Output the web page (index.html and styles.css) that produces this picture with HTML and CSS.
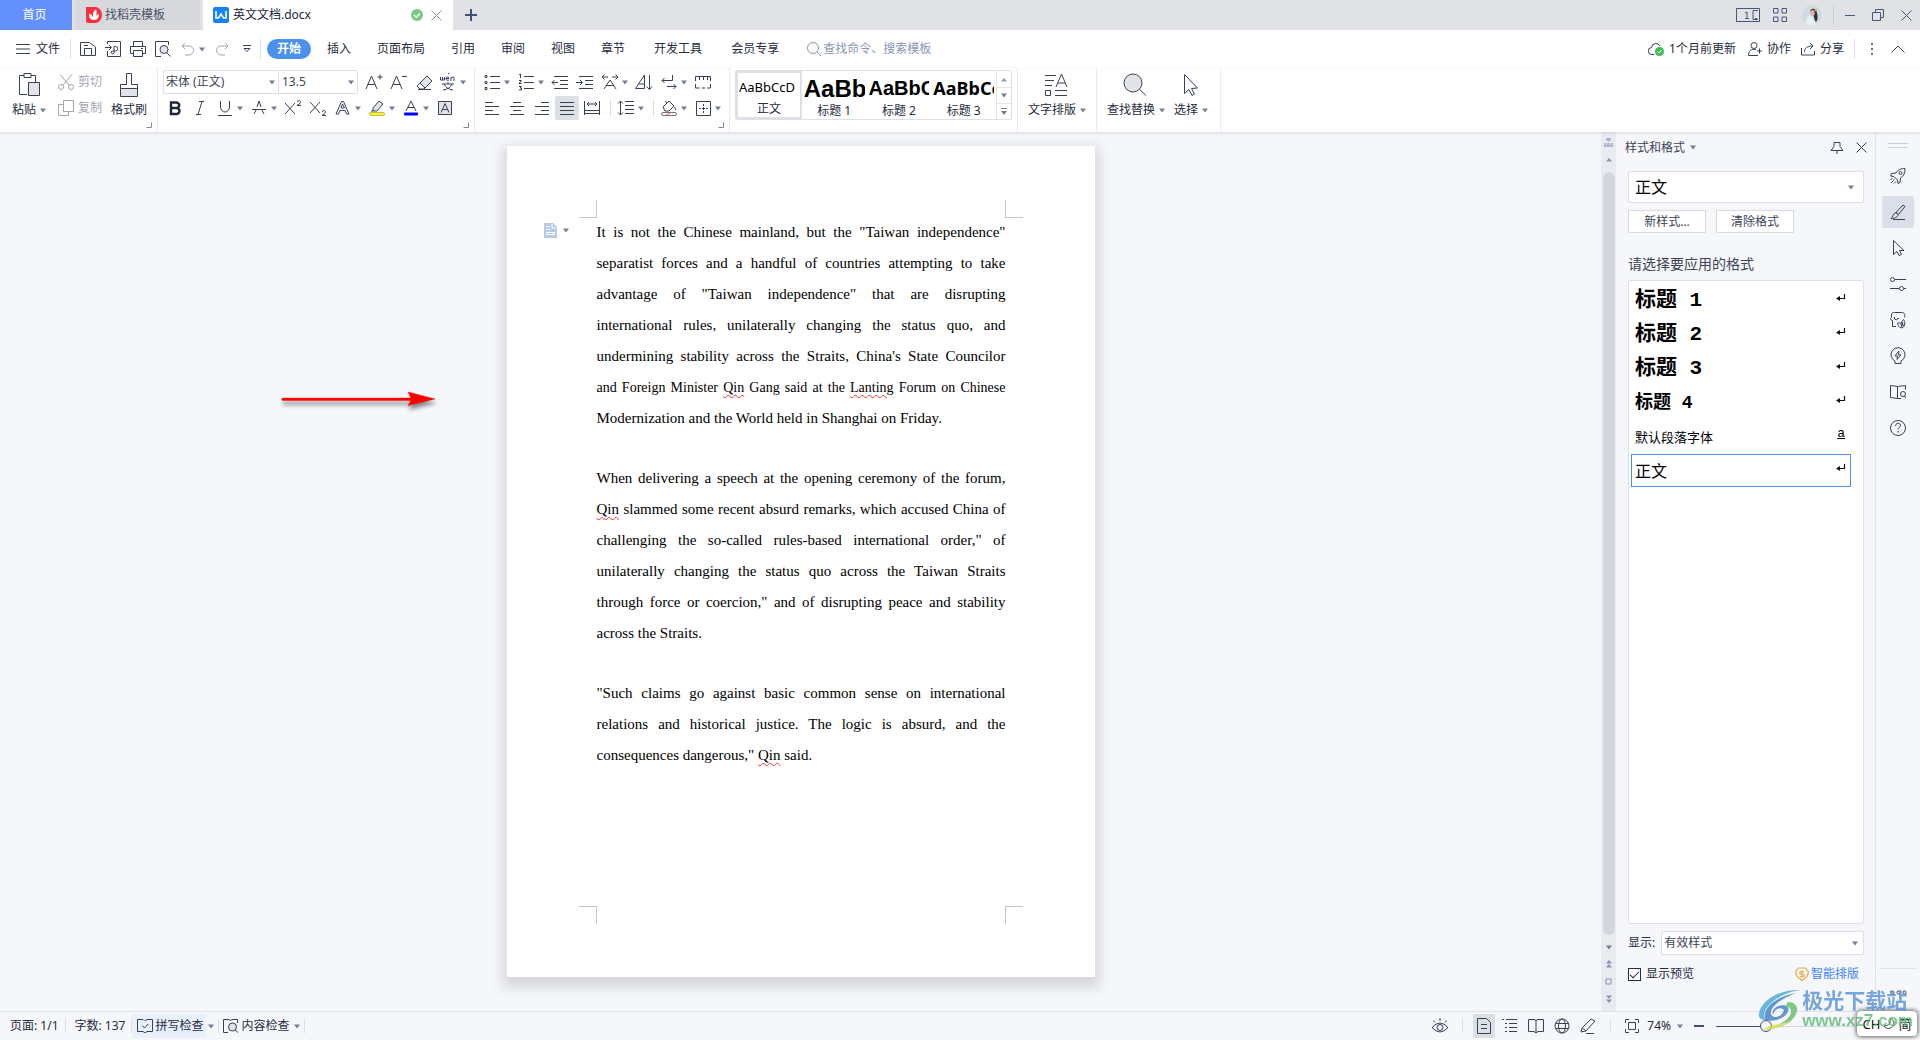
FILE: index.html
```html
<!DOCTYPE html>
<html lang="zh-CN">
<head>
<meta charset="utf-8">
<title>英文文档.docx</title>
<link rel="stylesheet" href="styles.css">
</head>
<body>
<svg class="defs" aria-hidden="true">
  <symbol id="caret" viewBox="0 0 8 5"><path d="M1 0.500h6L4 4.500z" fill="#737d95" stroke="none"/></symbol>
  <symbol id="ret" viewBox="0 0 10 8"><path d="M8.500 0v4.500H3" fill="none" stroke="#111" stroke-width="1.200"/><path d="M0 4.500L4 2v5z" fill="#111" stroke="none"/></symbol>
  <symbol id="launch" viewBox="0 0 6 6"><path d="M5.500 0.500v5h-5" fill="none" stroke="#7d88a0"/></symbol>
</svg>

<header class="titlebar">
  <button class="tab home">首页</button>
  <button class="tab template">
    <svg width="16" height="16" viewBox="0 0 16 16"><path d="M0 0h9a7 8 0 0 1 0 16H2a2 2 0 0 1-2-2z" fill="#f9303e"/><path d="M8 13C3 13 2.500 9 3.500 6.500 6 8 7 10 7.200 11.500 6.500 8 7 4 10 2.500c1.500 3 .5 6-1.500 9C9.500 9 11 7.500 13 7c0 4-2 6-5 6z" fill="#fff"/></svg>
    <span>找稻壳模板</span>
  </button>
  <div class="tab current">
    <svg width="16" height="16" viewBox="0 0 16 16"><rect width="16" height="16" rx="2" fill="#1583f8"/><path d="M3 4v7h2.500L8 7l2.500 4H13V4" fill="none" stroke="#fff" stroke-width="1.600"/></svg>
    <span>英文文档.docx</span>
    <svg class="ok" width="12" height="12" viewBox="0 0 12 12"><circle cx="6" cy="6" r="6" fill="#79cb83"/><path d="M3 6l2.300 2.300L9 4.500" fill="none" stroke="#fff" stroke-width="1.300"/></svg>
    <button class="bare" aria-label="关闭标签"><svg width="11" height="11" viewBox="0 0 11 11"><path class="s-muted" d="M.5.5l10 10M10.500.5l-10 10"/></svg></button>
  </div>
  <button class="bare plus" aria-label="新建"><svg width="12" height="12" viewBox="0 0 12 12"><path d="M6 0v12M0 6h12" stroke="#41506f" stroke-width="2"/></svg></button>
  <div class="win">
    <button class="bare" aria-label="窗口"><svg width="24" height="14" viewBox="0 0 24 14"><path class="s-blue" d="M.5.5h23v13H.5zM22 2.500h-5v9h5M19 10.500h2"/><path class="s-blue" d="M9 5l2-1v6M9 10.500h4"/></svg></button>
    <button class="bare" aria-label="应用"><svg width="14" height="14" viewBox="0 0 14 14"><path class="s-blue" d="M.5.5h4.500v4.500H.5zM9 .5h4.500v4.500H9zM.5 9h4.500v4.500H.5zM9 9h4.500v4.500H9z"/></svg></button>
    <button class="bare account" aria-label="账户"><svg width="20" height="20" viewBox="0 0 20 20"><circle cx="10" cy="10" r="10" fill="#cedbe1"/><path d="M4 18c0-5 2-7 5-8l5 9a10 10 0 0 1-9 0z" fill="#e5f2f5"/><path d="M8 6c2-4 7-2 7 2 1 3 1 7-1 9-2-2-2-6-3-8z" fill="#38303b"/><ellipse cx="10.500" cy="8" rx="2.200" ry="3" fill="#ddb1ab"/><circle cx="14" cy="5" r="1.400" fill="#d4b96e"/></svg></button>
    <span class="sep tall"></span>
    <button class="bare" aria-label="最小化"><svg width="10" height="12" viewBox="0 0 10 12"><path class="s-blue" d="M0 6.500h10"/></svg></button>
    <button class="bare" aria-label="还原"><svg width="12" height="12" viewBox="0 0 12 12"><path class="s-blue" d="M.5 3.500h8v8h-8zM3.500 3V.5h8v8H9"/></svg></button>
    <button class="bare" aria-label="关闭"><svg width="11" height="11" viewBox="0 0 11 11"><path class="s-blue" d="M.5.5l10 10M10.500.5l-10 10"/></svg></button>
  </div>
</header>

<nav class="menubar">
  <button class="bare file"><svg width="14" height="10" viewBox="0 0 14 10"><path class="s" d="M0 .5h14M0 5h14M0 9.500h14"/></svg><span>文件</span></button>
  <span class="sep"></span>
  <div class="quick">
    <button class="bare" aria-label="保存"><svg width="16" height="16" viewBox="0 0 16 16"><path class="s" d="M4 14.500H.5V1.500h9l6 4.500v8.500H12M4.500 14.500v-7h7v7zM4 4.500h4"/></svg></button>
    <button class="bare" aria-label="输出为PDF"><svg width="16" height="16" viewBox="0 0 16 16"><path class="s" d="M2.500 3V.5h13v15h-13V10M0 6.500h6M4 4l2.500 2.500L4 9M9 12V5.500h1.500a2 2 0 0 1 0 4.500H7a1.500 1.500 0 1 0 2 2"/></svg></button>
    <button class="bare" aria-label="打印"><svg width="16" height="16" viewBox="0 0 16 16"><path class="s" d="M3.500 5V.5h9V5M3.500 12.500h-3v-7h15v7h-3M3.500 9.500h9v6h-9zM11 7.500h2"/></svg></button>
    <button class="bare" aria-label="打印预览"><svg width="16" height="16" viewBox="0 0 16 16"><path class="s" d="M6 15.500H.5V.5h13V4M11.500 11.500l4 4"/><circle class="s" cx="9" cy="8.500" r="4" fill="#dde0e8"/></svg></button>
    <button class="bare undo" aria-label="撤销"><svg width="14" height="14" viewBox="0 0 14 14"><path class="s-dim" d="M4 1L1 4l3 3M1 4h7a4.500 4.500 0 0 1 0 9H4"/></svg><svg class="c"><use href="#caret"/></svg></button>
    <button class="bare redo" aria-label="恢复"><svg width="14" height="14" viewBox="0 0 14 14"><path class="s-dim" d="M10 1l3 3-3 3M13 4H6a4.500 4.500 0 0 0 0 9h4"/></svg></button>
    <button class="bare" aria-label="更多"><svg width="8" height="8" viewBox="0 0 8 8"><path class="s" d="M0 .5h8M1 3.500l3 3 3-3z"/></svg></button>
  </div>
  <span class="sep"></span>
  <div class="menus">
    <button class="pill">开始</button><button class="bare">插入</button><button class="bare">页面布局</button><button class="bare">引用</button><button class="bare">审阅</button><button class="bare">视图</button><button class="bare">章节</button><button class="bare">开发工具</button><button class="bare">会员专享</button>
  </div>
  <label class="search"><svg width="14" height="14" viewBox="0 0 14 14"><circle class="s-muted" cx="6" cy="6" r="5.500"/><path class="s-muted" d="M10 10l4 4"/></svg><input type="text" placeholder="查找命令、搜索模板" aria-label="查找命令"></label>
  <div class="share">
    <button class="bare cloud"><svg width="16" height="14" viewBox="0 0 16 14"><path class="s" d="M6 12.500H4a3.500 3.500 0 0 1-.5-7A4.500 4.500 0 0 1 12 4"/><circle cx="11.500" cy="9.500" r="4.500" fill="#3ebd54"/><path d="M9.500 9.500l1.500 1.500 2.500-3" stroke="#fff" fill="none"/></svg><span>1个月前更新</span></button>
    <button class="bare"><svg width="14" height="14" viewBox="0 0 14 14"><circle class="s" cx="6" cy="3.500" r="3"/><path class="s" d="M8 7.500C3 6.500.5 9 .5 13.500h9.500M9 9h5M11.500 6.500v5"/></svg><span>协作</span></button>
    <button class="bare"><svg width="14" height="14" viewBox="0 0 14 14"><path class="s" d="M.5 6v7h13V9M3.500 10c0-4 3-6 8-6M9 1l3 3-3 3"/></svg><span>分享</span></button>
    <span class="sep"></span>
    <button class="bare dots" aria-label="更多"><svg width="2" height="12" viewBox="0 0 2 12"><path d="M0 0h2v2H0zM0 5h2v2H0zM0 10h2v2H0z" fill="#6b7285"/></svg></button>
    <button class="bare" aria-label="收起"><svg width="14" height="8" viewBox="0 0 14 8"><path class="s" d="M.5 7.500L7 1l6.500 6.500"/></svg></button>
  </div>
</nav>

<section class="ribbon" aria-label="功能区">
  <div class="group clip">
    <button class="big"><svg width="22" height="24" viewBox="0 0 22 24"><path class="s" d="M8 21.500H.5v-19H5M12 2.500h4.500V9M5 .5h7v4H5z"/><path class="s" d="M9.500 9.500h11v13h-11z" fill="#e2e4e8"/></svg><span>粘贴<svg class="c"><use href="#caret"/></svg></span></button>
    <div class="stack">
      <button class="bare faded"><svg width="16" height="16" viewBox="0 0 16 16"><path class="s-dim" d="M2 .5l9.500 11M14 .5L4.500 11.500"/><circle class="s-dim" cx="3" cy="13" r="2.500"/><circle class="s-dim" cx="13" cy="13" r="2.500"/></svg><span>剪切</span></button>
      <button class="bare faded"><svg width="16" height="16" viewBox="0 0 16 16"><path class="s-dim" d="M5.500.5h10v11h-10zM5 4.500H.5v11h10V12"/></svg><span>复制</span></button>
    </div>
    <button class="big"><svg width="18" height="24" viewBox="0 0 18 24"><path class="s" d="M.5 15.500h17v8H.5z" fill="#e2e4e8"/><path class="s" d="M.5 15.500v-4h6V.5h5v11h6v4"/></svg><span>格式刷</span></button>
    <svg class="launch"><use href="#launch"/></svg>
  </div>

  <div class="group font">
    <div class="row first">
      <span class="combo fam"><select aria-label="字体"><option>宋体 (正文)</option></select><svg class="c"><use href="#caret"/></svg></span><span class="combo size"><select aria-label="字号"><option>13.5</option></select><svg class="c"><use href="#caret"/></svg></span>
      <div class="tools">
      <button class="t" aria-label="增大字号"><svg viewBox="0 0 20 20"><path class="s" d="M3 17L8.500 4 14 17M5 12.500h7M14.500 5h5M17 2.500v5"/></svg></button>
      <button class="t" aria-label="减小字号"><svg viewBox="0 0 20 20"><path class="s" d="M3 17L8.500 4 14 17M5 12.500h7M14 4.500h5"/></svg></button>
      <button class="t" aria-label="清除格式"><svg viewBox="0 0 20 20"><path class="s" d="M7 11l7-7 5 5-7 7z" fill="#e2e4e8"/><path class="s" d="M7 11l-3 3 3 3h4l1-1M5 17.500h13"/></svg></button>
      <button class="t" aria-label="拼音指南"><svg viewBox="0 0 20 20"><path class="s" d="M2.500 5v3h4V5M4.500 5v3M8 6.500h3c0-2-3-2-3 0s2 2 3 1.500M13 9V5.500q3-1 3 0V9M10 2l1.500-1M4 12h12M10 10v2M6 12q2 5 9 6M14 12q-2 5-9 6"/></svg><svg class="c"><use href="#caret"/></svg></button>
      </div>
    </div>
    <div class="row tools">
      <button class="t" aria-label="加粗"><svg viewBox="0 0 20 20"><path d="M6 4.500h5a3 2.500 0 0 1 0 5.500H6zM6 10h5.500a3 3 0 0 1 0 6H6z" fill="none" stroke="#20263a" stroke-width="2.400"/></svg></button>
      <button class="t" aria-label="倾斜"><svg viewBox="0 0 20 20"><path class="s" d="M9 3.500h5M6 16.500h5M12 3.500l-4 13"/></svg></button>
      <button class="t" aria-label="下划线"><svg viewBox="0 0 20 20"><path class="s" d="M5.500 3v6a4.500 5 0 0 0 9 0V3M3 17.500h14"/></svg><svg class="c"><use href="#caret"/></svg></button>
      <button class="t" aria-label="删除线"><svg viewBox="0 0 20 20"><path class="s" d="M5 16l2-4M8 9l2-6 2 6M13 12l2 4M3 11.500h14"/></svg><svg class="c"><use href="#caret"/></svg></button>
      <button class="t" aria-label="上标"><svg viewBox="0 0 20 20"><path class="s" d="M2 5l10 11M12 5L2 16M14 3.500q3-2 3.500 0t-3.500 4h4"/></svg></button>
      <button class="t" aria-label="下标"><svg viewBox="0 0 20 20"><path class="s" d="M2 4l10 11M12 4L2 15M14 13.500q3-2 3.500 0t-3.500 4h4"/></svg></button>
      <button class="t" aria-label="文字效果"><svg viewBox="0 0 20 20"><path class="s" d="M3 16L8.500 3.500h2L16 16h-2.500l-1.500-3.500H7L5.500 16zM8 10h3.500L9.500 6z"/></svg><svg class="c"><use href="#caret"/></svg></button>
      <button class="t" aria-label="突出显示"><svg viewBox="0 0 20 20"><path class="s" d="M6 10l6-7 4 3-6 7H6zM6 13H4" fill="#e2e4e8"/><rect x="2.500" y="14.500" width="15" height="3" rx="1.500" fill="#ff0" stroke="#8b8b55" stroke-width=".6"/></svg><svg class="c"><use href="#caret"/></svg></button>
      <button class="t" aria-label="字体颜色"><svg viewBox="0 0 20 20"><path class="s" d="M5 13l5-10 5 10M7 9.500h6"/><rect x="3" y="14.500" width="14" height="3" rx="1" fill="#00f"/></svg><svg class="c"><use href="#caret"/></svg></button>
      <button class="t" aria-label="字符底纹"><svg viewBox="0 0 20 20"><path class="s" d="M3.500 3.500h13v13h-13z" fill="#e2e4e8"/><path class="s" d="M6 14.500L10 5.500l4 9M7.500 11.500h5"/></svg></button>
    </div>
    <svg class="launch"><use href="#launch"/></svg>
  </div>

  <div class="group para">
    <div class="row tools">
      <button class="t" aria-label="项目符号"><svg viewBox="0 0 20 20"><path class="s" d="M8 4.500h10M8 10.500h10M8 16.500h10"/><path class="s" d="M3 3.500h2v2H3zM3 9.500h2v2H3zM3 15.500h2v2H3z"/></svg><svg class="c"><use href="#caret"/></svg></button>
      <button class="t" aria-label="编号"><svg viewBox="0 0 20 20"><path class="s" d="M8 4.500h10M8 10.500h10M8 16.500h10M3 3l1.500-1v4M3 8.500h2.500l-2.500 3h2.500M3 14.500h2.500l-1.500 1.500h1.500v2H3"/></svg><svg class="c"><use href="#caret"/></svg></button>
      <button class="t" aria-label="减少缩进"><svg viewBox="0 0 20 20"><path class="s" d="M4 4.500h14M10 8.500h8M10 12.500h8M4 16.500h14M2 10.500h6M4.500 8L2 10.500 4.500 13"/></svg></button>
      <button class="t" aria-label="增加缩进"><svg viewBox="0 0 20 20"><path class="s" d="M4 4.500h14M10 8.500h8M10 12.500h8M4 16.500h14M1 10.500h6M5 8l2.500 2.500L5 13"/></svg></button>
      <button class="t" aria-label="中文版式"><svg viewBox="0 0 20 20"><path class="s" d="M4 17l6-9 6 9M6 13.500h8M2 5h6M4.500 2.500L2 5l2.500 2.500M12 5h6M15.500 2.500L18 5l-2.500 2.500"/></svg><svg class="c"><use href="#caret"/></svg></button>
      <button class="t" aria-label="排序"><svg viewBox="0 0 20 20"><path class="s" d="M1.500 16.500L10.500 3v13.500zM5 12h5.500M15.500 3v14M12.500 14.500l3 3 2.500-3"/></svg></button>
      <button class="t" aria-label="显示编辑标记"><svg viewBox="0 0 20 20"><path class="s" d="M13.500 3v5.500H3M5.500 6L3 8.500 5.500 11M8 14.500h9M14.500 12l2.500 2.500L14.500 17"/></svg><svg class="c"><use href="#caret"/></svg></button>
      <button class="t" aria-label="制表位"><svg viewBox="0 0 20 20"><path class="s" d="M2.500 9V4.500h15V9M6.500 5v3M10.500 5v3M14.500 5v3M2.500 12v4h4M9 16h3M14 16h3.500v-4"/></svg></button>
    </div>
    <div class="row tools">
      <button class="t" aria-label="左对齐"><svg viewBox="0 0 20 20"><path class="s" d="M3 4.500h8M3 8.500h14M3 12.500h8M3 16.500h14"/></svg></button>
      <button class="t" aria-label="居中"><svg viewBox="0 0 20 20"><path class="s" d="M6 4.500h8M3 8.500h14M6 12.500h8M3 16.500h14"/></svg></button>
      <button class="t" aria-label="右对齐"><svg viewBox="0 0 20 20"><path class="s" d="M9 4.500h8M3 8.500h14M9 12.500h8M3 16.500h14"/></svg></button>
      <button class="t on" aria-label="两端对齐"><svg viewBox="0 0 20 20"><path class="s" d="M3 4.500h14M3 8.500h14M3 12.500h14M3 16.500h14"/></svg></button>
      <button class="t" aria-label="分散对齐"><svg viewBox="0 0 20 20"><path class="s" d="M2.500 3v14M17.500 3v14M5 6h10M7 4L5 6l2 2M13 4l2 2-2 2M2.500 12.500h15M2.500 15.500h15"/></svg></button>
      <span class="sep"></span>
      <button class="t" aria-label="行距"><svg viewBox="0 0 20 20"><path class="s" d="M9 3.500h9M9 7.500h9M9 11.500h9M9 15.500h9M4.500 3v14M2 5.500L4.500 3 7 5.500M2 14.500L4.500 17 7 14.500"/></svg><svg class="c"><use href="#caret"/></svg></button>
      <span class="sep"></span>
      <button class="t" aria-label="底纹颜色"><svg viewBox="0 0 20 20"><path class="s" d="M4 9l6-6 5 5-5 5H6zM8 5L6.500 3M15.500 9l1.500 3"/><rect x="2.500" y="14.500" width="15" height="3" rx="1.500" fill="#fff" stroke="#777"/><path d="M7 17.500l5-3" stroke="#e05a5a"/></svg><svg class="c"><use href="#caret"/></svg></button>
      <button class="t" aria-label="边框"><svg viewBox="0 0 20 20"><path class="s" d="M3.500 3.500h14v14h-14zM10.500 6v2M10.500 9v3M10.500 13v2M6 10.500h2M9 10.500h3M13 10.500h2"/></svg><svg class="c"><use href="#caret"/></svg></button>
    </div>
    <svg class="launch"><use href="#launch"/></svg>
  </div>

  <div class="group gallery-group">
    <div class="gallery">
      <button class="style sel"><b class="p0">AaBbCcD</b><span>正文</span></button>
      <button class="style"><b class="p1">AaBb</b><span>标题 1</span></button>
      <button class="style"><b class="p2">AaBbC</b><span>标题 2</span></button>
      <button class="style"><b class="p3">AaBbCc</b><span>标题 3</span></button>
      <div class="roller">
        <button class="bare" aria-label="向上"><svg width="8" height="5" viewBox="0 0 8 5"><path d="M1 4.500h6L4 1z" fill="#9299a8"/></svg></button>
        <button class="bare" aria-label="向下"><svg class="c"><use href="#caret"/></svg></button>
        <button class="bare" aria-label="展开"><svg width="8" height="8" viewBox="0 0 8 8"><path d="M1 0h6v1H1zM1 3h6L4 7z" fill="#737d95"/></svg></button>
      </div>
    </div>
  </div>
  <div class="group mid">
    <button class="big"><svg width="24" height="24" viewBox="0 0 24 24"><path class="s" d="M1 2.500h11M1 7.500h9M1 12.500h7M1.500 17.500h5v5h-5zM11 17.500h12M11 22.500h12M12 14l5.500-13L23 14M14 10h7"/></svg><span>文字排版<svg class="c"><use href="#caret"/></svg></span></button>
  </div>
  <div class="group mid last">
    <button class="big"><svg width="24" height="24" viewBox="0 0 24 24"><circle class="s" cx="10" cy="10" r="9" fill="#e2e4e8"/><path class="s" d="M16.500 16.500l6.500 6"/></svg><span>查找替换<svg class="c"><use href="#caret"/></svg></span></button>
    <button class="big"><svg width="18" height="24" viewBox="0 0 18 24"><path class="s" d="M3.500 1.500v19l4.500-4 3 6 2.500-1.500-3-5.500 6-.5z"/></svg><span>选择<svg class="c"><use href="#caret"/></svg></span></button>
  </div>
</section>

<main class="work">
  <section class="canvas">
    <article class="page">
      <div class="marks top"><i></i><i></i></div>
      <div class="text">
        <div class="smart"><svg width="13" height="15" viewBox="0 0 13 15"><path d="M0 0h9l4 4v11H0z" fill="#b6c9e8"/><path d="M2 3.500h4M2 6.500h4M2 9.500h8.500v2H2M8 1v4h4" fill="none" stroke="#fff"/></svg><svg class="c"><use href="#caret"/></svg></div>
        <p><span>It is not the Chinese mainland, but the "Taiwan independence"</span> <span>separatist forces and a handful of countries attempting to take</span> <span>advantage of "Taiwan independence" that are disrupting</span> <span>international rules, unilaterally changing the status quo, and</span> <span>undermining stability across the Straits, China's State Councilor</span> <span class="full">and Foreign Minister <u>Qin</u> Gang said at the <u>Lanting</u> Forum on Chinese</span> <span class="end">Modernization and the World held in Shanghai on Friday.</span></p>
        <p><span>When delivering a speech at the opening ceremony of the forum,</span> <span><u>Qin</u> slammed some recent absurd remarks, which accused China of</span> <span>challenging the so-called rules-based international order," of</span> <span>unilaterally changing the status quo across the Taiwan Straits</span> <span>through force or coercion," and of disrupting peace and stability</span> <span class="end">across the Straits.</span></p>
        <p><span>"Such claims go against basic common sense on international</span> <span>relations and historical justice. The logic is absurd, and the</span> <span class="end">consequences dangerous," <u>Qin</u> said.</span></p>
      </div>
      <div class="marks bottom"><i></i><i></i></div>
    </article>
    <svg class="arrow" width="170" height="34" viewBox="0 0 170 34"><path d="M13 11h128l-3-6 27 7-27 6.500 3-5H13a1 1 0 0 1 0-2.500z" fill="red" stroke="#d00" stroke-width=".4"/></svg>
  </section>

  <div class="scroll">
    <svg width="9" height="9" viewBox="0 0 9 9"><path d="M2 0h5v2L4.500 4 2 2zM0 5h2v2h1V5h3v2h1V5h2v4H0z" fill="#b1b6cc"/></svg>
    <svg width="8" height="5" viewBox="0 0 8 5"><path d="M1 4.500h6L4 1z" fill="#8790ad"/></svg>
    <div class="thumb"></div>
    <svg class="c"><use href="#caret"/></svg>
    <svg width="8" height="8" viewBox="0 0 8 8"><path d="M1 3.500h6L4 0zM1 7.500h6L4 4z" fill="#8790ad"/></svg>
    <svg width="7" height="7" viewBox="0 0 7 7"><path d="M1 1h5v5H1z" fill="none" stroke="#8790ad"/></svg>
    <svg width="8" height="8" viewBox="0 0 8 8"><path d="M1 .5h6L4 4zM1 4.500h6L4 8z" fill="#8790ad"/></svg>
  </div>

  <aside class="panel">
    <header><h2>样式和格式</h2><svg class="c"><use href="#caret"/></svg>
      <button class="bare pin" aria-label="固定"><svg width="14" height="14" viewBox="0 0 14 14"><path class="s" d="M4 1.500h6v4l3 4H1l3-4zM7 9.500V13"/></svg></button>
      <button class="bare" aria-label="关闭"><svg width="11" height="11" viewBox="0 0 11 11"><path class="s" d="M.5.5l10 10M10.500.5l-10 10"/></svg></button>
    </header>
    <span class="combo current-style"><select aria-label="当前样式"><option>正文</option></select><svg class="c"><use href="#caret"/></svg></span>
    <div class="btns"><button>新样式...</button><button>清除格式</button></div>
    <h3>请选择要应用的格式</h3>
    <ul class="styles">
      <li class="h"><span>标题 1</span><svg class="r"><use href="#ret"/></svg></li>
      <li class="h"><span>标题 2</span><svg class="r"><use href="#ret"/></svg></li>
      <li class="h"><span>标题 3</span><svg class="r"><use href="#ret"/></svg></li>
      <li class="h small"><span>标题 4</span><svg class="r"><use href="#ret"/></svg></li>
      <li class="def"><span>默认段落字体</span><span class="a">a</span></li>
      <li class="chosen"><span>正文</span><svg class="r"><use href="#ret"/></svg></li>
    </ul>
    <div class="show"><label for="show">显示:</label><span class="combo"><select id="show"><option>有效样式</option></select><svg class="c"><use href="#caret"/></svg></span></div>
    <div class="preview">
      <label><input type="checkbox" checked>显示预览</label>
      <a href="#"><svg width="14" height="14" viewBox="0 0 14 14"><path d="M3.500 1h7L13.500 5 12 9.500 7 13.500 2 9.500.5 5z" fill="none" stroke="#f0a63c" stroke-width="1.200"/><path d="M9 4.500H6a1 1 0 0 0 0 2.500h2a1 1 0 0 1 0 2.500H5M7 3.500v7" fill="none" stroke="#f0a63c" stroke-width="1.200"/></svg>智能排版</a>
    </div>
  </aside>

  <nav class="side">
    <span class="grip"></span>
    <button class="bare" aria-label="推荐"><svg width="18" height="18" viewBox="0 0 18 18"><path class="s" d="M16 1.500c-4 0-7 1-9 4.500l-4.500.5L1.500 9 5 9.500 8.500 13l.5 3.500 2-1 .5-4.500C15 9 16 5.500 16 1.500zM3.500 11l-2 2M5.500 12.500L2 16M7 14.500l-2 2"/><circle class="s" cx="11.500" cy="6" r="1.500"/></svg></button>
    <button class="bare on" aria-label="样式"><svg width="18" height="18" viewBox="0 0 18 18"><path class="s" d="M7 9.500l7-7.500 2 1.500-6.500 8zM7 9.500L9.500 11.500C8 15 5 15.500 2 15.500c2-1 1.500-5 5-6zM4 16.500h12"/></svg></button>
    <button class="bare" aria-label="选择"><svg width="18" height="18" viewBox="0 0 18 18"><path class="s" d="M4.500 1.500v14l3.500-3 2 4 2.500-1-2-4h4.500z"/></svg></button>
    <button class="bare" aria-label="属性"><svg width="18" height="18" viewBox="0 0 18 18"><circle class="s" cx="3.500" cy="4.500" r="2"/><circle class="s" cx="12.500" cy="13.500" r="2"/><path class="s" d="M6 4.500h11M1 13.500h9M15 13.500h2"/></svg></button>
    <button class="bare" aria-label="素材"><svg width="18" height="18" viewBox="0 0 18 18"><path class="s" d="M7 15.500H3.500v-6C1 9 1 7 2.500 6.500V4c0-2 1-2.500 3-2.500h7c3 0 4 2 3 5M5.500 6v2l2 1 1.500-2 1 1"/><path class="s" d="M8.500 12c2-.5 3 0 3.500 1.500.5-2 1-3.500 2.500-5 1.500 2 2 6-.5 8-3 1-5-1-5.500-4.500zM12 13.500l1 2.500M14 11l-1 4M16 12.500l-2 2.500"/></svg></button>
    <button class="bare" aria-label="灵感"><svg width="18" height="18" viewBox="0 0 18 18"><path class="s" d="M6 16.500V14A7 7 0 1 1 12 14v2.500zM10 4L6 9h2.500L8 12.500 12 8H9.500z"/></svg></button>
    <button class="bare" aria-label="阅读"><svg width="18" height="18" viewBox="0 0 18 18"><path class="s" d="M8.500 3.500L1.500 2.500v12l7 1zM8.500 3.500l8-1v4M8.500 15.500H12"/><circle class="s" cx="14" cy="11" r="2.500"/><path class="s" d="M15.500 13l1.500 2"/></svg></button>
    <button class="bare" aria-label="帮助"><svg width="18" height="18" viewBox="0 0 18 18"><circle class="s" cx="9" cy="9" r="7.500"/><path class="s" d="M6.500 7c0-3.500 5-3.500 5-.5 0 2-2.500 2-2.500 4M9 12v1.500"/></svg></button>
    <span class="rule"></span>
    <button class="bare more" aria-label="更多"><svg width="17" height="5" viewBox="0 0 17 5"><circle class="s" cx="2.500" cy="2.500" r="1.500"/><circle class="s" cx="8.500" cy="2.500" r="1.500"/><circle class="s" cx="14.500" cy="2.500" r="1.500"/></svg></button>
  </nav>
</main>

<footer class="status">
  <span class="cell">页面: 1/1</span><span class="sep"></span><span class="cell">字数: 137</span><span class="sep"></span>
  <button class="bare spell"><svg width="16" height="14" viewBox="0 0 16 14"><path class="s" d="M7 1.500L6 .5H.5v12H6l2 1.500 2-1.500h5.500V.5H10L8 2M5 6.500L7.500 9 11 5"/></svg>拼写检查</button><svg class="c"><use href="#caret"/></svg><span class="sep next"></span>
  <button class="bare content"><svg width="16" height="14" viewBox="0 0 16 14"><path class="s" d="M5 13.500H.5V.5H6l1.500 1L9 .5h5.500V4M12 11l3 2.500"/><circle class="s" cx="9.500" cy="8" r="4" fill="#e0e3e8"/></svg>内容检查</button><svg class="c"><use href="#caret"/></svg><span class="sep next"></span>
  <div class="views">
    <button class="bare v" aria-label="护眼模式"><svg width="18" height="16" viewBox="0 0 18 16"><path class="s" d="M1 9.500q8-9 16 0-8 9-16 0zM9 0v3M2.500 2.500L4 4.500M15.500 2.500L14 4.500"/><circle class="s" cx="9" cy="9.500" r="3"/></svg></button>
    <span class="sep"></span>
    <button class="bare v on" aria-label="页面视图"><svg width="14" height="16" viewBox="0 0 14 16"><path class="s" d="M.5.5h9l4 4v11H.5zM4 6.500h6M4 10.500h6"/></svg></button>
    <button class="bare v" aria-label="大纲"><svg width="16" height="16" viewBox="0 0 16 16"><path class="s" d="M0 1.500h2M4 1.500h11M3 5.500h2M7 5.500h8M3 9.500h2M7 9.500h8M3 13.500h2M7 13.500h8"/></svg></button>
    <button class="bare v" aria-label="阅读版式"><svg width="16" height="16" viewBox="0 0 16 16"><path class="s" d="M8 3L7 1.500H.5v12H6L8 15l2-1.500h5.500v-12H9L8 3v11"/></svg></button>
    <button class="bare v" aria-label="Web版式"><svg width="16" height="16" viewBox="0 0 16 16"><circle class="s" cx="8" cy="8" r="7"/><ellipse class="s" cx="8" cy="8" rx="3.500" ry="7"/><path class="s" d="M1.500 5.500h13M1.500 10.500h13"/></svg></button>
    <button class="bare v" aria-label="写作模式"><svg width="16" height="16" viewBox="0 0 16 16"><path class="s" d="M1 14l1-4 9-9 4 2-9 10zM2.500 10l3.500 3M6 15.500h8"/></svg></button>
    <span class="sep"></span>
    <button class="bare v" aria-label="适合窗口"><svg width="14" height="14" viewBox="0 0 14 14"><path class="s" d="M4 .5H.5V4M10 .5h3.500V4M4 13.500H.5V10M10 13.500h3.500V10M3.500 3.500h7v7h-7z"/></svg></button>
    <button class="bare zoom">74%<svg class="c"><use href="#caret"/></svg></button>
    <button class="bare minus" aria-label="缩小"><svg width="10" height="2" viewBox="0 0 10 2"><path d="M0 0h10v2H0z" fill="#41506f"/></svg></button>
    <input class="slider" type="range" min="0" max="100" value="31" aria-label="显示比例">
  </div>
</footer>

<div class="ime">CH <svg width="12" height="14" viewBox="0 0 12 14"><path class="s" d="M7 1c1.500 4-1 8-6 8 2 4 10 3 10-3 0-2-1.500-4-4-5z"/></svg> 简</div>
<div class="brand">
  <svg width="44" height="42" viewBox="0 0 44 42"><path d="M42 1C24 0 4 10 1 24c-1 5 2 7 6 7C2 20 18 5 42 1z" fill="#45a6dc"/><path d="M7 31C4 20 16 8 38 4 22 10 12 18 13 25c2 6 12 2 13-4-5-5-11 2-11 5-3-7 10-13 15-8 3 8-11 16-23 13z" fill="#3d7fc5"/><path d="M30 13c8 0 11 6 8 12C34 34 22 40 8 40c12-3 24-9 25-17 0-4-2-6-6-5z" fill="#64bd68"/><path d="M6 41c10 0 20-4 26-9-8 3-14 4-20 4z" fill="#d4dc4c"/></svg>
  <div><strong>极光下载站</strong><em>www.xz7.com</em></div>
</div>
</body>
</html>
```
FILE: styles.css
```css
* { box-sizing: border-box; }
body {
  margin: 0; height: 100vh; display: flex; flex-direction: column; overflow: hidden;
  font: 12px/16px "Noto Sans", "Noto Sans CJK SC", sans-serif; color: #262b3c; background: #f5f7fa;
}
button, select, input { font: inherit; color: inherit; margin: 0; }
button { white-space: nowrap; }
svg { flex: none; display: block; fill: none; }
.defs { display: none; }
.bare, .tab, .big, .t, .style { border: 0; background: none; padding: 0; display: flex; align-items: center; justify-content: center; }
.s { fill: none; stroke: #394055; }
.s[fill] { fill: #e2e4e8; }
.s-dim { stroke: #a3a6ad; }
.s-muted { stroke: #8c96b3; }
.s-blue { stroke: #465779; }
.c { width: 8px; height: 5px; }
.sep { width: 1px; height: 20px; background: #dcdee4; flex: none; }

/* title bar */
.titlebar { height: 30px; flex: none; display: flex; background: #e1e2e6; }
.home { width: 72px; background: #6390fb; color: #fff; padding-right: 3px; }
.template { width: 125px; margin-left: 3px; padding: 0 11px; gap: 3px; background: #d8d9dd; justify-content: flex-start; color: #4d5263; }
.current { width: 250px; margin-left: 3px; padding: 0 11px 0 10px; gap: 4px; background: #fff; justify-content: flex-start; color: #20253a; }
.ok { margin-left: auto; margin-right: 4px; }
.plus { margin-left: 12px; }
.win { display: flex; align-items: center; margin-left: auto; padding-right: 8px; gap: 13px; }
.win .sep { background: #c9cbd2; margin: 0 -2px 0 -2px; }
.win .account { margin-left: 2px; }
.win .bare:nth-of-type(n+5) { margin-left: 4px; }

/* menu row */
.menubar { height: 38px; flex: none; display: flex; align-items: center; background: #fff; padding: 0 15px 0 16px; }
.file { gap: 6px; margin-right: 10px; }
.quick { display: flex; align-items: center; gap: 9px; padding: 0 9px; }
.quick .undo { gap: 3px; margin-left: 1px; }
.quick .redo { margin-right: 5px; }
.menus { display: flex; align-items: center; gap: 26px; padding-left: 6px; }
.pill { border: 0; border-radius: 10px; height: 20px; width: 44px; padding: 0; margin-right: -10px; background: #4a90ef; color: #fff; font-weight: 700; line-height: 20px; }
.menus .bare:nth-child(n+8) { margin-left: 3px; }
.search { display: flex; align-items: center; gap: 2px; margin-left: 28px; }
.search input { border: 0; padding: 0; width: 130px; outline: 0; background: none; }
.search input::placeholder { color: #8c96b3; opacity: 1; }
.share { margin-left: auto; display: flex; align-items: center; gap: 10px; }
.share .bare { gap: 5px; }
.share .cloud { margin-right: 2px; }
.share .dots { margin: 0 8px 0 6px; }

/* ribbon */
.ribbon { height: 64px; flex: none; display: flex; background: #fff; box-shadow: 0 1px 3px #0002; position: relative; z-index: 1; }
.group { display: flex; position: relative; border-right: 1px solid #e8eaee; }
.launch { width: 6px; height: 6px; position: absolute; right: 5px; bottom: 4px; }
.big { flex-direction: column; justify-content: flex-start; gap: 5px; padding-top: 5px; }
.big span { display: flex; align-items: center; gap: 3px; }
.clip { width: 158px; padding-left: 12px; }
.stack { display: flex; flex-direction: column; gap: 10px; padding: 6px 9px 0 11px; }
.stack .bare { gap: 4px; color: #a3a6ad; }
.font { width: 317px; flex-direction: column; padding: 2px 0 0 5px; gap: 2px; }
.row { display: flex; align-items: center; height: 24px; }
.combo { display: grid; background: #fff; border: 1px solid #dcdee4; border-radius: 2px; }
.combo > * { grid-area: 1 / 1; }
.combo select { appearance: none; border: 0; background: none; padding: 0 0 0 2px; width: 100%; outline: 0; color: #3d4356; }
.combo .c { justify-self: end; align-self: center; margin-right: 4px; }
.fam { width: 116px; height: 24px; border-radius: 2px 0 0 2px; }
.size { width: 79px; height: 24px; border-left: 0; border-radius: 0 2px 2px 0; }
.row .combo .c { margin-right: 2px; }
.size select { padding-left: 3px; }
.tools { display: flex; align-items: center; }
.first .tools { margin-left: 5px; }
.font > .tools { padding-left: 2px; }
.t { height: 24px; gap: 1px; padding-right: 5px; }
.t svg:first-child { width: 20px; height: 20px; }
.t .c { width: 8px; }
.t.on { width: 24px; padding: 0 2px; margin: 0 3px 0 -2px; background: #dbe0e5; border-radius: 2px; }
.para { width: 255px; flex-direction: column; padding: 2px 0 0 7px; gap: 2px; }
.para .sep { height: 18px; margin: 0 5px 0 3px; }
.gallery-group { width: 288px; padding: 2px 0 0 5px; }
.gallery { display: flex; width: 277px; height: 50px; border: 1px solid #dfe0e6; border-radius: 2px; }
.style { width: 65px; flex-direction: column; padding: 2px 2px 0; overflow: hidden; }
.style b { height: 29px; line-height: 29px; width: 100%; overflow: hidden; text-align: left; color: #000; }
.style span { height: 16px; }
.sel { width: 66px; border: 2px solid #dfe0e6; padding: 0 1px; }
.p0 { font-weight: 400; font-size: 13px; }
.p1 { font: 700 24px/29px "Liberation Sans", sans-serif; }
.p2 { font: 700 20px/29px "Liberation Sans", sans-serif; }
.p3 { font-size: 18px; }
.roller { margin-left: auto; width: 15px; display: grid; grid-template-rows: 1fr 1fr 1fr; border-left: 1px solid #e4e6ea; }
.roller .bare + .bare { border-top: 1px solid #e4e6ea; }
.mid { padding: 0 9px 0 10px; }
.mid .big > svg { margin-right: 4px; }
.last { padding: 0 11px 0 10px; gap: 8px; }

/* work area */
.work { flex: 1; min-height: 0; display: flex; }
.canvas { flex: 1; position: relative; overflow: hidden; display: flex; justify-content: center; align-items: flex-start; padding-top: 14px; }
.page { width: 588px; min-height: 831px; background: #fff; box-shadow: 0 6px 12px 5px #00000020; padding: 54px 72px 0; display: flex; flex-direction: column; }
.marks { display: flex; justify-content: space-between; }
.marks i { width: 18px; height: 18px; border: 0 solid #c6c6c6; }
.marks i:first-child { border-right-width: 1px; }
.marks i:last-child { border-left-width: 1px; }
.top i { border-bottom-width: 1px; }
.bottom i { border-top-width: 1px; }
.bottom { margin-top: auto; margin-bottom: 53px; }
.text { margin: -1px 17px 0 18px; position: relative; font: 15px/31px "Liberation Serif", serif; color: #000; }
.text p { margin: 0 0 29px; }
.text p:last-child { margin: 0; }
.text p span { display: block; text-align: justify; text-align-last: justify; white-space: nowrap; }
.text p .end { text-align-last: left; }
.text p .full { font-size: 14px; }
.text u { text-decoration: underline wavy #e33 1px; text-underline-offset: 2px; }
.smart { position: absolute; left: -53px; top: 6px; display: flex; align-items: center; gap: 5px; }
.arrow { position: absolute; left: 270px; top: 255px; filter: drop-shadow(1px 4px 2px #0007); }

.scroll { width: 15px; display: flex; flex-direction: column; align-items: center; gap: 10px; padding: 6px 0 8px; background: #eaebf1; }
.thumb { flex: 1; width: 12px; border-radius: 6px; background: #d4d6de; }

.panel { width: 260px; border-right: 1px solid #dfe2e8; padding: 0 11px 29px 12px; display: flex; flex-direction: column; color: #3d4356; }
.panel header { display: flex; align-items: center; height: 31px; margin: 0 -4px 0 -3px; gap: 4px; padding-right: 1px; }
.panel h2 { margin: 0; font-size: 12px; font-weight: 400; }
.pin { margin-left: auto; margin-right: 8px; }
.current-style { height: 32px; margin-top: 8px; font-size: 16px; color: #000; }
.current-style select { padding-left: 6px; color: #000; }
.current-style .c { margin-right: 8px; }
.btns { display: flex; gap: 10px; margin-top: 7px; }
.btns button { width: 78px; height: 23px; padding: 0; background: #fff; border: 1px solid #d8dbe2; color: #3d4356; }
.panel h3 { margin: 20px 0 6px; font-size: 14px; font-weight: 400; line-height: 21px; }
.styles { list-style: none; flex: 1; margin: 0; padding: 3px 12px 0 2px; background: #fff; border: 1px solid #dcdee4; border-radius: 2px; color: #000; }
.styles li { height: 34px; display: flex; justify-content: space-between; align-items: center; padding: 0 5px 0 4px; }
.styles .h { font: 700 21px/34px "Liberation Mono", "Noto Sans CJK SC", sans-serif; }
.styles .small { font-size: 18px; }
.styles .def { font-size: 13px; }
.styles .chosen { font-size: 16px; border: 1px solid #4a8ee8; padding: 0 4px 0 3px; height: 33px; }
.r { width: 10px; height: 8px; margin-bottom: 6px; }
.a { font-family: "Liberation Mono", monospace; text-decoration: underline; margin-bottom: 6px; padding-right: 1px; }
.show { display: flex; align-items: center; gap: 6px; margin-top: 7px; color: #262b3c; }
.show .combo { flex: 1; height: 24px; }
.preview { display: flex; justify-content: space-between; align-items: center; margin-top: 11px; padding-right: 5px; color: #262b3c; }
.preview label { display: flex; align-items: center; gap: 5px; }
.preview input { appearance: none; width: 13px; height: 13px; border: 1px solid #262b3c; background: #fff; display: grid; place-items: center; }
.preview input:checked::before { content: ""; width: 8px; height: 4px; border: solid #262b3c; border-width: 0 0 1px 1px; rotate: -45deg; margin-bottom: 2px; }
.preview a { display: flex; align-items: center; gap: 2px; color: #417ff9; text-decoration: none; }

.side { width: 44px; display: flex; flex-direction: column; align-items: center; gap: 4px; }
.side .bare { width: 32px; height: 32px; border-radius: 2px; }
.side .on { background: #dbe0e8; }
.grip { width: 20px; height: 5px; border: solid #cdcfd5; border-width: 1px 0; margin: 11px 0 8px; }
.rule { width: 38px; height: 1px; background: #dfe2e8; margin-top: auto; }
.side .more { height: 38px; }

/* status bar */
.status { height: 29px; flex: none; display: flex; align-items: center; border-top: 1px solid #dfe2e8; }
.status .sep { height: 14px; }
.cell { padding: 0 6px 0 9px; }
.cell:first-child { padding-left: 10px; }
.spell { background: #e8f0fc; height: 24px; padding: 0 3px 0 5px; gap: 2px; margin-right: 1px; }
.content { gap: 2px; padding: 0 3px 0 4px; }
.next { margin-left: 3px; }
.views { margin-left: auto; display: flex; align-items: center; padding-right: 51px; }
.v { width: 22px; height: 24px; margin-right: 4px; }
.v.on { background: #dbe0e5; border-radius: 2px; }
.views .sep { margin: 0 10px 0 7px; }
.zoom { gap: 5px; margin-right: 10px; }
.minus { margin-right: 12px; }
.slider { appearance: none; width: 153px; height: 12px; background: linear-gradient(90deg, #41506f 32%, #d4d7de 32%) center / 100% 1px no-repeat; }
.slider::-webkit-slider-thumb { appearance: none; width: 12px; height: 12px; border-radius: 50%; border: 1px solid #41506f; background: #f5f7fa; }

/* floating items */
.ime { position: absolute; right: 3px; bottom: 4px; width: 60px; height: 25px; border-radius: 4px; background: #fff; box-shadow: 0 0 4px 1px #0009; display: flex; align-items: center; justify-content: center; gap: 3px; font-size: 13px; color: #111; }
.brand { position: absolute; right: 7px; bottom: 9px; display: flex; opacity: .8; z-index: 2; pointer-events: none; }
.brand strong { display: block; font-size: 21px; line-height: 22px; color: #5791d8; }
.brand em { display: block; font: 700 17px/20px "Liberation Sans", sans-serif; color: #5ebb77; }
```
